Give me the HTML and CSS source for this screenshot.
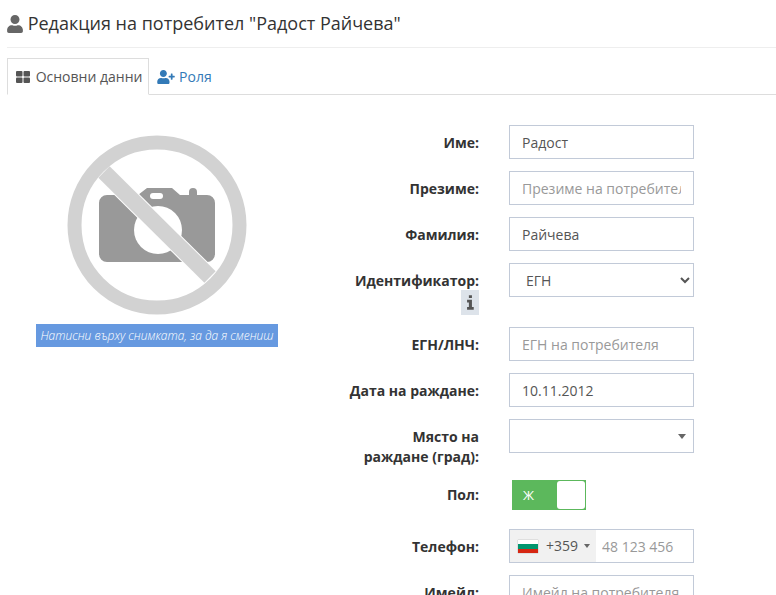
FILE: index.html
```html
<!DOCTYPE html>
<html lang="bg">
<head>
    <meta charset="UTF-8">
    <meta name="viewport" content="width=device-width, initial-scale=1.0">
    <title>Редакция на потребител</title>
    <link rel="stylesheet" href="styles.css">
</head>
<body>
    <h1 class="page-title">
        <svg class="title-icon" viewBox="0 0 448 512"><path d="M224 256c70.7 0 128-57.3 128-128S294.7 0 224 0 96 57.3 96 128s57.3 128 128 128zm89.6 32h-16.7c-22.2 10.2-46.9 16-72.9 16s-50.6-5.8-72.9-16h-16.7C60.2 288 0 348.2 0 422.4V464c0 26.5 21.5 48 48 48h352c26.5 0 48-21.5 48-48v-41.6c0-74.2-60.2-134.4-134.4-134.4z"/></svg>
        Редакция на потребител "Радост Райчева"
    </h1>

    <!-- Табове -->
    <ul class="tabs">
        <li class="tab active">
            <svg class="tab-icon" viewBox="0 0 14 14"><rect x="0" y="1" width="6.5" height="5.5" rx="1"/><rect x="7.5" y="1" width="6.5" height="5.5" rx="1"/><rect x="0" y="7.5" width="6.5" height="5.5" rx="1"/><rect x="7.5" y="7.5" width="6.5" height="5.5" rx="1"/></svg>
            Основни данни
        </li>
        <li class="tab">
            <svg class="tab-icon wide" viewBox="0 0 640 512"><path d="M624 208h-64v-64c0-8.8-7.2-16-16-16h-32c-8.800 0-16 7.200-16 16v64h-64c-8.800 0-16 7.200-16 16v32c0 8.800 7.200 16 16 16h64v64c0 8.800 7.200 16 16 16h32c8.800 0 16-7.200 16-16v-64h64c8.800 0 16-7.200 16-16v-32c0-8.800-7.200-16-16-16zm-400 48c70.700 0 128-57.300 128-128S294.700 0 224 0 96 57.300 96 128s57.300 128 128 128zm89.600 32h-16.700c-22.200 10.200-46.900 16-72.900 16s-50.600-5.800-72.900-16h-16.700C60.200 288 0 348.200 0 422.400V464c0 26.500 21.500 48 48 48h352c26.500 0 48-21.500 48-48v-41.600c0-74.200-60.200-134.400-134.400-134.400z"/></svg>
            Роля
        </li>
    </ul>

    <div class="content">
        <!-- Снимка -->
        <div class="photo">
            <svg class="no-photo" viewBox="0 0 180 180">
                <path class="cam" d="M40 60h31l9-7h25l8 7h9v-3a4 4 0 0 1 8 0v3h10a8 8 0 0 1 8 8v51a8 8 0 0 1-8 8H40a8 8 0 0 1-8-8V68a8 8 0 0 1 8-8z"/>
                <rect class="cam-hole" x="83" y="58" width="13" height="6" rx="3"/>
                <circle class="cam-hole" cx="91" cy="95" r="24"/>
                <line class="band-gap" x1="37" y1="37" x2="143" y2="142"/>
                <line class="band" x1="37" y1="37" x2="143" y2="142"/>
                <circle class="ring" cx="90" cy="90" r="82.500"/>
            </svg>
            <div class="photo-hint">Натисни върху снимката, за да я смениш</div>
        </div>

        <!-- Форма -->
        <div class="user-form">
            <div class="form-row">
                <label class="form-label">Име:</label>
                <input class="form-input" type="text" value="Радост">
            </div>
            <div class="form-row">
                <label class="form-label">Презиме:</label>
                <input class="form-input" type="text" placeholder="Презиме на потребителя">
            </div>
            <div class="form-row">
                <label class="form-label">Фамилия:</label>
                <input class="form-input" type="text" value="Райчева">
            </div>
            <div class="form-row">
                <div class="form-label">
                    <label>Идентификатор:</label>
                    <span class="info-badge">
                        <svg viewBox="0 0 10 16"><path d="M3.200 0h3.400v3H3.200zM1.200 5h5.400v8h2v3H1.200v-3h2V8h-2z"/></svg>
                    </span>
                </div>
                <select class="form-input form-select">
                    <option>ЕГН</option>
                </select>
            </div>
            <div class="form-row">
                <label class="form-label">ЕГН/ЛНЧ:</label>
                <input class="form-input" type="text" placeholder="ЕГН на потребителя">
            </div>
            <div class="form-row">
                <label class="form-label">Дата на раждане:</label>
                <input class="form-input" type="text" value="10.11.2012">
            </div>
            <div class="form-row">
                <label class="form-label two-lines">Място на<br>раждане (град):</label>
                <div class="form-input combo"><span class="caret"></span></div>
            </div>
            <div class="form-row">
                <label class="form-label switch-label">Пол:</label>
                <div class="switch">
                    <span class="switch-on">Ж</span>
                    <span class="switch-handle"></span>
                </div>
            </div>
            <div class="form-row">
                <label class="form-label">Телефон:</label>
                <div class="form-input phone">
                    <div class="phone-code">
                        <span class="flag"></span>
                        +359
                        <span class="caret small"></span>
                    </div>
                    <input class="phone-input" type="text" placeholder="48 123 456">
                </div>
            </div>
            <div class="form-row">
                <label class="form-label">Имейл:</label>
                <input class="form-input" type="text" placeholder="Имейл на потребителя">
            </div>
        </div>
    </div>
</body>
</html>
```

FILE: styles.css
```css
html, body {
    height: 595px;
    overflow: hidden;
}
body {
    font-family: "Open Sans", sans-serif;
    font-size: 14px;
    line-height: 20px;
    color: #333;
    margin: 0;
    padding: 0 0 0 7px;
    background-color: #fff;
}
.page-title {
    width: 769px;
    height: 48px;
    box-sizing: border-box;
    margin: 0;
    padding-top: 11px;
    font-size: 18px;
    font-weight: 400;
    line-height: 24px;
    border-bottom: 1px solid #eee;
}
.title-icon {
    width: 16px;
    height: 18px;
    fill: #666;
    vertical-align: -3px;
}
.tabs {
    display: flex;
    list-style: none;
    margin: 10px 0 30px;
    padding: 0;
    height: 37px;
    box-sizing: border-box;
    border-bottom: 1px solid #ddd;
}
.tab {
    height: 37px;
    box-sizing: border-box;
    padding: 8px 6px 8px 7px;
    color: #337ab7;
    border: 1px solid transparent;
}
.tab.active {
    padding-left: 8px;
    color: #555;
    background-color: #fff;
    border-color: #ddd;
    border-bottom-color: #fff;
}
.tab-icon {
    width: 14px;
    height: 14px;
    margin-right: 2px;
    fill: #555;
    vertical-align: -2px;
}
.tab-icon.wide {
    width: 18px;
    fill: #337ab7;
    margin-right: 0;
}
.content {
    display: flex;
}
.photo {
    width: 242px;
    margin-left: 29px;
    margin-right: 70px;
    padding-top: 10px;
}
.no-photo {
    display: block;
    width: 180px;
    height: 180px;
    margin: 0 0 9px 31px;
}
.cam {
    fill: #999;
}
.cam-hole {
    fill: #fff;
}
.band {
    stroke: #d2d2d2;
    stroke-width: 16;
}
.band-gap {
    stroke: #fff;
    stroke-width: 18;
}
.ring {
    fill: none;
    stroke: #d2d2d2;
    stroke-width: 14;
}
.photo-hint {
    height: 23px;
    line-height: 23px;
    font-size: 12px;
    font-style: italic;
    font-weight: 300;
    text-align: center;
    color: #fff;
    background-color: #6699e0;
    white-space: nowrap;
}
.user-form {
    display: flex;
    flex-direction: column;
    gap: 12px;
}
.form-row {
    display: flex;
    gap: 30px;
    align-items: flex-start;
}
.form-label {
    width: 131px;
    padding-top: 8px;
    font-weight: 700;
    text-align: right;
}
.form-label.two-lines {
    margin-bottom: -1px;
}
.form-label.switch-label {
    padding-top: 7px;
}
.form-input {
    display: block;
    width: 185px;
    height: 34px;
    box-sizing: border-box;
    padding: 6px 12px;
    font-family: inherit;
    font-size: 14px;
    color: #555;
    background-color: #fff;
    border: 1px solid #c2cad8;
    border-radius: 0;
    outline: none;
}
.form-input::placeholder, .phone-input::placeholder {
    color: #999;
}
.form-select {
    padding-left: 12px;
}
.info-badge {
    display: block;
    width: 18px;
    height: 25px;
    margin: -1px 0 0 auto;
    background-color: #dde3ea;
    text-align: center;
}
.info-badge svg {
    width: 9px;
    height: 15px;
    margin-top: 5px;
    fill: #555;
}
.combo {
    position: relative;
}
.caret {
    position: absolute;
    top: 14px;
    right: 7px;
    border-top: 5px solid #666;
    border-left: 4px solid transparent;
    border-right: 4px solid transparent;
}
.caret.small {
    position: static;
    display: inline-block;
    margin-left: -2px;
    border-top-width: 4px;
    border-left-width: 3px;
    border-right-width: 3px;
}
.switch {
    display: flex;
    width: 74px;
    height: 30px;
    margin: 2px 0 7px 3px;
    box-sizing: border-box;
    border: 1px solid #5cb85c;
    background-color: #5cb85c;
}
.switch-on {
    flex: 1;
    padding-left: 10px;
    font-size: 13px;
    line-height: 28px;
    color: #fff;
}
.switch-handle {
    width: 28px;
    background-color: #fff;
    border-radius: 3px;
}
.phone {
    display: flex;
    padding: 0;
}
.phone-code {
    display: flex;
    align-items: center;
    width: 86px;
    flex-shrink: 0;
    box-sizing: border-box;
    padding-left: 8px;
    gap: 8px;
    color: #555;
    background-color: #f1f1f1;
}
.flag {
    width: 20px;
    height: 13px;
    background: linear-gradient(#fff 0 33%, #00966e 33% 66%, #d62612 66%);
    box-shadow: 0 0 1px #888;
}
.phone-input {
    width: 90px;
    min-width: 0;
    padding: 0 0 0 6px;
    border: 0;
    outline: none;
    font-family: inherit;
    font-size: 14px;
    color: #555;
}
```
